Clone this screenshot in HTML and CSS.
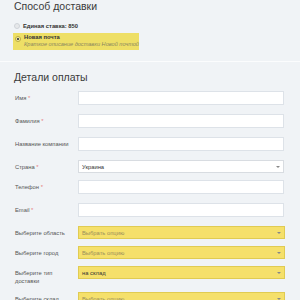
FILE: index.html
```html
<!DOCTYPE html>
<html lang="ru">
<head>
<meta charset="utf-8">
<link rel="stylesheet" href="styles.css">
</head>
<body>
<section class="shipping">
  <h2 class="title">Способ доставки</h2>
  <ul class="methods">
    <li class="method">
      <span class="radio"></span>
      <span class="method-name">Единая ставка: 850</span>
    </li>
    <li class="method method-active">
      <span class="radio radio-on"></span>
      <div class="method-body">
        <span class="method-name">Новая почта</span>
        <span class="method-desc">Краткое описание доставки Новой почтой</span>
      </div>
    </li>
  </ul>
</section>
<section class="billing">
  <h2 class="title">Детали оплаты</h2>
  <div class="row">
    <label class="label">Имя <span class="req">*</span></label>
    <div class="field input"></div>
  </div>
  <div class="row">
    <label class="label">Фамилия <span class="req">*</span></label>
    <div class="field input"></div>
  </div>
  <div class="row">
    <label class="label">Название компании</label>
    <div class="field input"></div>
  </div>
  <div class="row row-select">
    <label class="label">Страна <span class="req">*</span></label>
    <div class="field select"><span class="value">Украина</span><span class="arrow"></span></div>
  </div>
  <div class="row">
    <label class="label">Телефон <span class="req">*</span></label>
    <div class="field input"></div>
  </div>
  <div class="row">
    <label class="label">Email <span class="req">*</span></label>
    <div class="field input"></div>
  </div>
  <div class="row row-select">
    <label class="label">Выберите область</label>
    <div class="field select hl"><span class="value placeholder">Выбрать опцию</span><span class="arrow"></span></div>
  </div>
  <div class="row row-select">
    <label class="label">Выберите город</label>
    <div class="field select hl"><span class="value placeholder">Выбрать опцию</span><span class="arrow"></span></div>
  </div>
  <div class="row row-select">
    <label class="label">Выберите тип<br>доставки</label>
    <div class="field select hl"><span class="value">на склад</span><span class="arrow"></span></div>
  </div>
  <div class="row row-select">
    <label class="label">Выберите склад</label>
    <div class="field select hl"><span class="value placeholder">Выбрать опцию</span><span class="arrow"></span></div>
  </div>
</section>
</body>
</html>
```
FILE: styles.css
```css
html, body {
  margin: 0;
  padding: 0;
  background: #f0f3f6;
  font-family: "Liberation Sans", Arial, sans-serif;
  color: #333;
  overflow: hidden;
}
.title {
  margin: 0;
  font-size: 10.5px;
  line-height: 12px;
  font-weight: normal;
  color: #3a3a3a;
}
.shipping {
  padding: 0 0 11px 14px;
  border-bottom: 1px solid #fbfcfd;
}
.methods {
  list-style: none;
  margin: 9px 0 0 0;
  padding: 0;
}
.method {
  display: flex;
  align-items: center;
  height: 10px;
  margin-bottom: 2px;
  white-space: nowrap;
}
.method-active {
  align-items: flex-start;
  height: auto;
  width: 122px;
  margin-left: -1px;
  padding: 1px 2px 2px 2px;
  background: #eedf66;
  margin-bottom: 0;
}
.radio {
  width: 4px;
  height: 4px;
  border-radius: 50%;
  border: 1px solid #cfd3d8;
  background: #e6e8ea;
  margin-right: 3px;
  flex: none;
}
.radio-on {
  margin-top: 1.5px;
  border-color: #b9ab45;
  background: radial-gradient(circle, #555 0 1px, #f4ec9e 1.3px);
}
.method-name {
  font-size: 5.8px;
  line-height: 7px;
  font-weight: bold;
  color: #333;
}
.method-body {
  display: flex;
  flex-direction: column;
}
.method-desc {
  font-size: 5.6px;
  line-height: 7px;
  font-style: italic;
  color: #8b8760;
}
.billing {
  padding: 9px 16px 0 14px;
}
.billing .title {
  margin-bottom: 8px;
}
.row {
  display: flex;
  align-items: flex-start;
  margin-bottom: 9px;
}
.row-select {
  margin-bottom: 7px;
}
.label {
  width: 64px;
  flex: none;
  padding-top: 3px;
  font-size: 5.8px;
  line-height: 8px;
  color: #555;
  padding-left: 1px;
  padding-right: 1px;
  box-sizing: border-box;
  white-space: nowrap;
}
.req {
  color: #e67a7a;
}
.field {
  flex: 1;
  box-sizing: border-box;
  background: #fff;
  border: 1px solid #dde2e8;
}
.input {
  height: 14px;
}
.select {
  height: 13px;
  display: flex;
  align-items: center;
  padding: 0 3px 0 3px;
  border-color: #d8dce1;
}
.value {
  flex: 1;
  font-size: 5.8px;
  color: #333;
}
.arrow {
  width: 0;
  height: 0;
  border-left: 2px solid transparent;
  border-right: 2px solid transparent;
  border-top: 2.5px solid #888;
}
.hl {
  background: #f5e06b;
  border-color: #e0cb52;
  margin-right: -1px;
}
.placeholder {
  color: #9a8f5c;
}
```
